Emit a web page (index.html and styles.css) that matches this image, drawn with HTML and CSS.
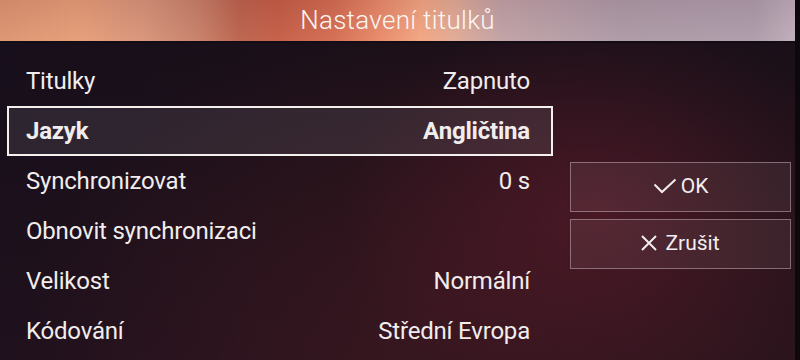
FILE: index.html
```html
<!DOCTYPE html>
<html lang="cs">
<head>
<meta charset="utf-8">
<link rel="stylesheet" href="styles.css">
</head>
<body>
<div class="screen">
  <header class="title-bar">
    <h1 class="title">Nastavení titulků</h1>
  </header>
  <main class="content">
    <ul class="menu">
      <li class="row"><span>Titulky</span><span>Zapnuto</span></li>
      <li class="row selected"><span>Jazyk</span><span>Angličtina</span></li>
      <li class="row"><span>Synchronizovat</span><span>0 s</span></li>
      <li class="row"><span>Obnovit synchronizaci</span><span></span></li>
      <li class="row"><span>Velikost</span><span>Normální</span></li>
      <li class="row"><span>Kódování</span><span>Střední Evropa</span></li>
    </ul>
    <div class="actions">
      <button class="btn">
        <svg class="icon" viewBox="0 0 24 16" width="24" height="16"><path d="M1.5 6.5 L9 14 L22.5 1.5" fill="none" stroke="#f2eeee" stroke-width="2"/></svg>
        <span>OK</span>
      </button>
      <button class="btn btn-cancel">
        <svg class="icon" viewBox="0 0 16 16" width="16" height="16"><path d="M1 1 L15 15 M15 1 L1 15" fill="none" stroke="#f2eeee" stroke-width="2"/></svg>
        <span>Zrušit</span>
      </button>
    </div>
  </main>
</div>
</body>
</html>
```
FILE: styles.css
```css
* { box-sizing: border-box; }
html, body { margin: 0; padding: 0; }
body {
  width: 800px;
  height: 360px;
  overflow: hidden;
  background: #160d14;
  font-family: Roboto, "Noto Sans", sans-serif;
  color: #f1eded;
}
.screen {
  width: 800px;
  height: 360px;
  display: flex;
  flex-direction: column;
  border-right: 5px solid #0d080c;
  background:
    radial-gradient(ellipse 260px 200px at 600px 210px, rgba(110, 30, 50, 0.45), rgba(110, 30, 50, 0) 100%),
    radial-gradient(ellipse 400px 300px at 430px 320px, rgba(70, 25, 35, 0.5), rgba(70, 25, 35, 0) 100%),
    linear-gradient(90deg, rgba(20, 14, 30, 0.5) 0%, rgba(20, 14, 30, 0) 50%),
    linear-gradient(180deg, #180f18 0%, #221219 60%, #2a141c 100%);
}
.title-bar {
  height: 43px;
  flex: none;
  display: flex;
  align-items: center;
  justify-content: center;
  background:
    linear-gradient(180deg, rgba(120, 60, 60, 0.12) 0%, rgba(255, 200, 170, 0.08) 100%),
    linear-gradient(90deg, #dc9370 0%, #e59d77 10%, #d6937a 18%, #c47e68 25%, #b8604b 30%, #c25a44 35%, #d26a50 42%, #e88a6a 48%, #f2a582 53%, #e0ab96 57%, #bea2a8 63%, #a999a9 78%, #aa9cad 95%, #bcaebd 100%);
  border-bottom: 2px solid #140c14;
}
.title {
  margin: 0;
  font-family: Roboto, sans-serif;
  font-weight: 300;
  font-size: 26px;
  letter-spacing: 0.3px;
  color: #fbf6f4;
  line-height: 1;
  padding-bottom: 2px;
}
.content {
  flex: 1;
  display: flex;
  padding: 13px 0 0 7px;
  gap: 17px;
}
.menu {
  list-style: none;
  margin: 0;
  padding: 0;
  width: 546px;
  display: flex;
  flex-direction: column;
}
.row {
  height: 50px;
  display: flex;
  align-items: center;
  justify-content: space-between;
  padding: 0 21px 0 17px;
  font-size: 24px;
  letter-spacing: -0.2px;
  border: 2px solid transparent;
}
.row.selected {
  border-color: #f4f0ee;
  background: rgba(120, 115, 125, 0.22);
  font-weight: 700;
}
.actions {
  padding-top: 106px;
  display: flex;
  flex-direction: column;
  gap: 7px;
  width: 221px;
}
.btn {
  height: 50px;
  display: flex;
  align-items: center;
  justify-content: center;
  gap: 4px;
  background: rgba(255, 240, 245, 0.07);
  border: 1px solid rgba(220, 200, 205, 0.45);
  color: #f2eeee;
  font-family: Roboto, sans-serif;
  font-size: 21px;
  letter-spacing: 0;
  padding: 0 0 2px 0;
}
.btn-cancel { gap: 8px; }
.icon { flex: none; }
```
